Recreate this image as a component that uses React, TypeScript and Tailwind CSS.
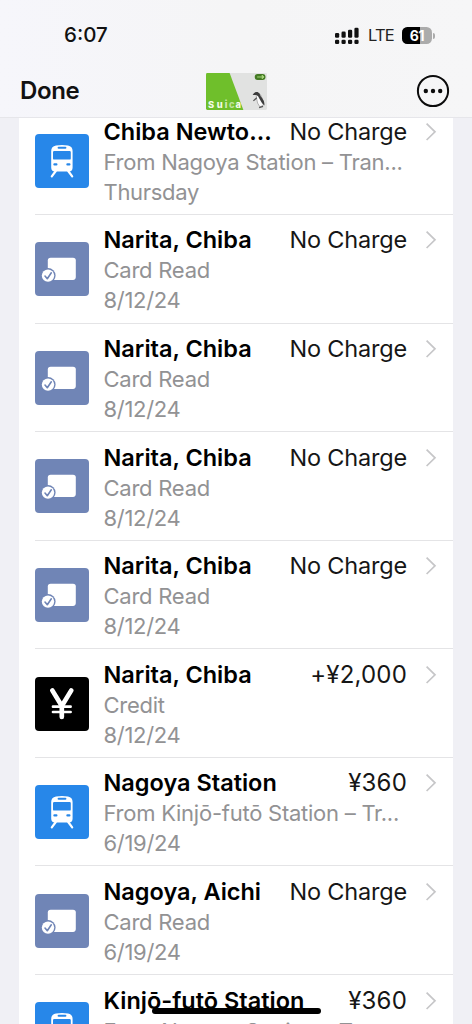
import clsx from "clsx";

type Kind = "train" | "card" | "credit";

type Transaction = {
  id: number;
  kind: Kind;
  title: string;
  amount: string;
  detail: string;
  date: string;
};

const transactions: Transaction[] = [
  { id: 1, kind: "train", title: "Chiba Newto...", amount: "No Charge", detail: "From Nagoya Station – Tran...", date: "Thursday" },
  { id: 2, kind: "card", title: "Narita, Chiba", amount: "No Charge", detail: "Card Read", date: "8/12/24" },
  { id: 3, kind: "card", title: "Narita, Chiba", amount: "No Charge", detail: "Card Read", date: "8/12/24" },
  { id: 4, kind: "card", title: "Narita, Chiba", amount: "No Charge", detail: "Card Read", date: "8/12/24" },
  { id: 5, kind: "card", title: "Narita, Chiba", amount: "No Charge", detail: "Card Read", date: "8/12/24" },
  { id: 6, kind: "credit", title: "Narita, Chiba", amount: "+¥2,000", detail: "Credit", date: "8/12/24" },
  { id: 7, kind: "train", title: "Nagoya Station", amount: "¥360", detail: "From Kinjō-futō Station – Tr...", date: "6/19/24" },
  { id: 8, kind: "card", title: "Nagoya, Aichi", amount: "No Charge", detail: "Card Read", date: "6/19/24" },
  { id: 9, kind: "train", title: "Kinjō-futō Station", amount: "¥360", detail: "From Nagoya Station – Tr...", date: "6/19/24" },
];

const tileColor: Record<Kind, string> = {
  train: "bg-[#2787e9]",
  card: "bg-[#7085b6]",
  credit: "bg-black",
};

function TrainIcon() {
  return (
    <svg viewBox="0 0 54 54" className="size-full">
      <path
        fill="#fff"
        fillRule="evenodd"
        d="M21 11.6Q27 10.2 33 11.6Q37.6 12.6 37.6 17V33.5Q37.6 37.6 34 37.6H20Q16.2 37.6 16.2 33.5V17Q16.2 12.6 21 11.6ZM23.6 12.8a1 1 0 0 0 0 2h6.8a1 1 0 0 0 0-2ZM19.2 17Q18 17 18 18.2V24.4Q18 25.6 19.2 25.6H34.6Q35.8 25.6 35.8 24.4V18.2Q35.8 17 34.6 17ZM19.4 29.3a1.1 1.1 0 0 0 0 2.2h2a1.1 1.1 0 0 0 0-2.2ZM32.4 29.3a1.1 1.1 0 0 0 0 2.2h2a1.1 1.1 0 0 0 0-2.2Z"
      />
      <path d="M20.8 37 16.8 42.3M33.2 37l4 5.3" stroke="#fff" strokeWidth="2.2" strokeLinecap="round" />
    </svg>
  );
}

function CardReadIcon() {
  return (
    <svg viewBox="0 0 54 54" className="size-full">
      <rect x="12.8" y="15.7" width="28" height="22.2" rx="2.8" fill="#fff" />
      <circle cx="13" cy="33.6" r="7.6" fill="#7085b6" />
      <circle cx="13" cy="33.6" r="6.2" fill="#fff" />
      <path d="m10 34 2.3 2.7 4-5.9" fill="none" stroke="#7085b6" strokeWidth="1.6" strokeLinecap="round" strokeLinejoin="round" />
    </svg>
  );
}

function YenIcon() {
  return (
    <svg viewBox="0 0 54 54" className="size-full">
      <path
        d="m17.3 13.4 9.5 15.6 9.5-15.6M26.8 28V40"
        fill="none"
        stroke="#fff"
        strokeWidth="4.7"
        strokeLinecap="round"
        strokeLinejoin="round"
      />
      <path d="M18 29.7h17.6M18 35h17.6" stroke="#fff" strokeWidth="2.7" strokeLinecap="round" />
    </svg>
  );
}

function TransactionIcon({ kind }: { kind: Kind }) {
  return (
    <div className={clsx("mt-px size-[54px] shrink-0 overflow-hidden rounded-[4px]", tileColor[kind])}>
      {kind === "train" && <TrainIcon />}
      {kind === "card" && <CardReadIcon />}
      {kind === "credit" && <YenIcon />}
    </div>
  );
}

function Chevron() {
  return (
    <svg viewBox="0 0 12 20" className="ml-[18px] h-5 w-3 shrink-0">
      <path d="m1.6 1.6 8.4 8.2-8.4 8.2" fill="none" stroke="#c6c6c8" strokeWidth="1.7" />
    </svg>
  );
}

function TransactionRow({ item }: { item: Transaction }) {
  const isNumeric = item.amount.includes("¥");

  return (
    <li className="ml-4 flex h-[108.6px] items-center border-b border-[#e4e4e6] pr-4">
      <TransactionIcon kind={item.kind} />
      <div className="mt-[3.5px] ml-[14.5px] min-w-0 flex-1 text-[22px] leading-[30px] whitespace-nowrap">
        <div className="flex items-center text-[23.5px] text-black">
          <p className="flex-1 font-semibold">{item.title}</p>
          <p className={clsx("text-[#161616]", isNumeric ? "text-[24px] tracking-[0.2px]" : "tracking-[-0.2px]")}>{item.amount}</p>
          <Chevron />
        </div>
        <p className="tracking-[-0.25px] text-[#929294]">{item.detail}</p>
        <p className="tracking-[-0.3px] text-[#929294]">{item.date}</p>
      </div>
    </li>
  );
}

function SignalIcon() {
  return (
    <svg viewBox="0 0 24 18" className="h-[18px] w-6">
      <g fill="#111">
        <rect x="0" y="6" width="4.2" height="4.8" rx="1.3" />
        <rect x="6.5" y="4.6" width="4.2" height="6.2" rx="1.3" />
        <rect x="13" y="2.8" width="4.2" height="8" rx="1.3" />
        <rect x="19.4" y="0.8" width="4.2" height="10" rx="1.3" />
        <rect x="0" y="12.8" width="4.2" height="4.2" rx="1.3" />
        <rect x="6.5" y="12.8" width="4.2" height="4.2" rx="1.3" />
        <rect x="13" y="12.8" width="4.2" height="4.2" rx="1.3" />
        <rect x="19.4" y="12.8" width="4.2" height="4.2" rx="1.3" />
      </g>
    </svg>
  );
}

function Battery({ level }: { level: number }) {
  return (
    <div className="flex items-center gap-[1px]">
      <div className="relative h-[17px] w-[30px] overflow-hidden rounded-[5.5px] bg-[#ababab]">
        <div className="h-full bg-black" style={{ width: `${level}%` }} />
        <span className="absolute inset-0 text-center text-[14px] leading-[17px] font-bold tracking-[-0.3px] text-white">{level}</span>
      </div>
      <div className="h-[6px] w-[2px] rounded-r-full bg-[#ababab]" />
    </div>
  );
}

function SuicaCard() {
  return (
    <svg viewBox="0 0 62 38" preserveAspectRatio="none" className="ml-[3px] h-[37px] w-[61px]">
      <rect width="62" height="38" rx="1.5" fill="#e1e2e1" />
      <path d="M1.5 0H24L38 38H1.5Q0 38 0 36.5V1.5Q0 0 1.5 0Z" fill="#6fbf2b" />
      <g fill="#f4fbe9" fontFamily="Inter, sans-serif" fontWeight="800" fontSize="9.5">
        <text x="2" y="35.5">S</text>
        <text x="11" y="35.5">u</text>
        <text x="19" y="35.5" opacity="0.75">i</text>
        <text x="23.4" y="35.5" opacity="0.6">c</text>
        <text x="30" y="35.5">a</text>
      </g>
      <rect x="49.5" y="1" width="11" height="6.2" rx="3" fill="#447a24" />
      <path d="M52 4.1h4.6M57 2.3v3.5l2-1.8Z" stroke="#a8d77d" strokeWidth="1" fill="#a8d77d" />
      <path d="M50.8 20.6Q55 20 56.4 24.5Q58.8 28.6 58.2 33.2L54.8 34.8Q51.8 31.4 51.4 26Z" fill="#fafafa" stroke="#888" strokeWidth=".6" />
      <path d="M47.4 22.6Q49 18.8 52.4 19.6Q54.8 20.4 55.6 24Q59.6 28.5 59.4 33.4Q56.4 31 54.6 27Q53 23 51.2 22.6Z" fill="#3c3c3c" />
      <path d="m51.6 25.4-3.4 3.2M54 35.6l4-1.4" fill="none" stroke="#555" strokeWidth="1.3" />
    </svg>
  );
}

function Header() {
  return (
    <header className="relative z-10 flex h-[118px] shrink-0 flex-col border-b border-[#e6e6ea] bg-linear-to-r from-[#f6f6fb] via-[#f5f5f6] to-[#f6f6f7]">
      <div className="flex h-[71px] items-center justify-between pr-[37px] pl-16">
        <span className="text-[20.5px] font-medium text-[#111]">6:07</span>
        <div className="flex items-center">
          <SignalIcon />
          <span className="mr-[8px] ml-[9px] text-[16.5px] tracking-[-0.8px] text-[#222]">LTE</span>
          <Battery level={61} />
        </div>
      </div>
      <nav className="grid h-[40px] grid-cols-[1fr_auto_1fr] items-center pr-[22px] pl-5">
        <button type="button" className="justify-self-start text-[24px] font-semibold tracking-[-0.4px] text-[#111]">
          Done
        </button>
        <SuicaCard />
        <button type="button" className="justify-self-end" aria-label="More">
          <svg viewBox="0 0 34 34" className="size-[34px]">
            <circle cx="17" cy="17" r="15.1" fill="none" stroke="#0c0c0c" strokeWidth="2" />
            <circle cx="9.8" cy="17" r="2.2" fill="#0c0c0c" />
            <circle cx="17" cy="17" r="2.2" fill="#0c0c0c" />
            <circle cx="24.2" cy="17" r="2.2" fill="#0c0c0c" />
          </svg>
        </button>
      </nav>
    </header>
  );
}

export default function App() {
  return (
    <div className="relative flex h-[1024px] w-[472px] flex-col overflow-hidden bg-[#f0f0f5] font-['Inter',sans-serif]">
      <Header />
      <main className="min-h-0 flex-1 overflow-hidden px-[19px]">
        <ul className="-mt-[11.7px] bg-white">
          {transactions.map((item) => (
            <TransactionRow key={item.id} item={item} />
          ))}
        </ul>
      </main>
      <div className="absolute bottom-[10px] left-[152px] z-20 h-[6px] w-[169px] rounded-full bg-black" />
    </div>
  );
}
